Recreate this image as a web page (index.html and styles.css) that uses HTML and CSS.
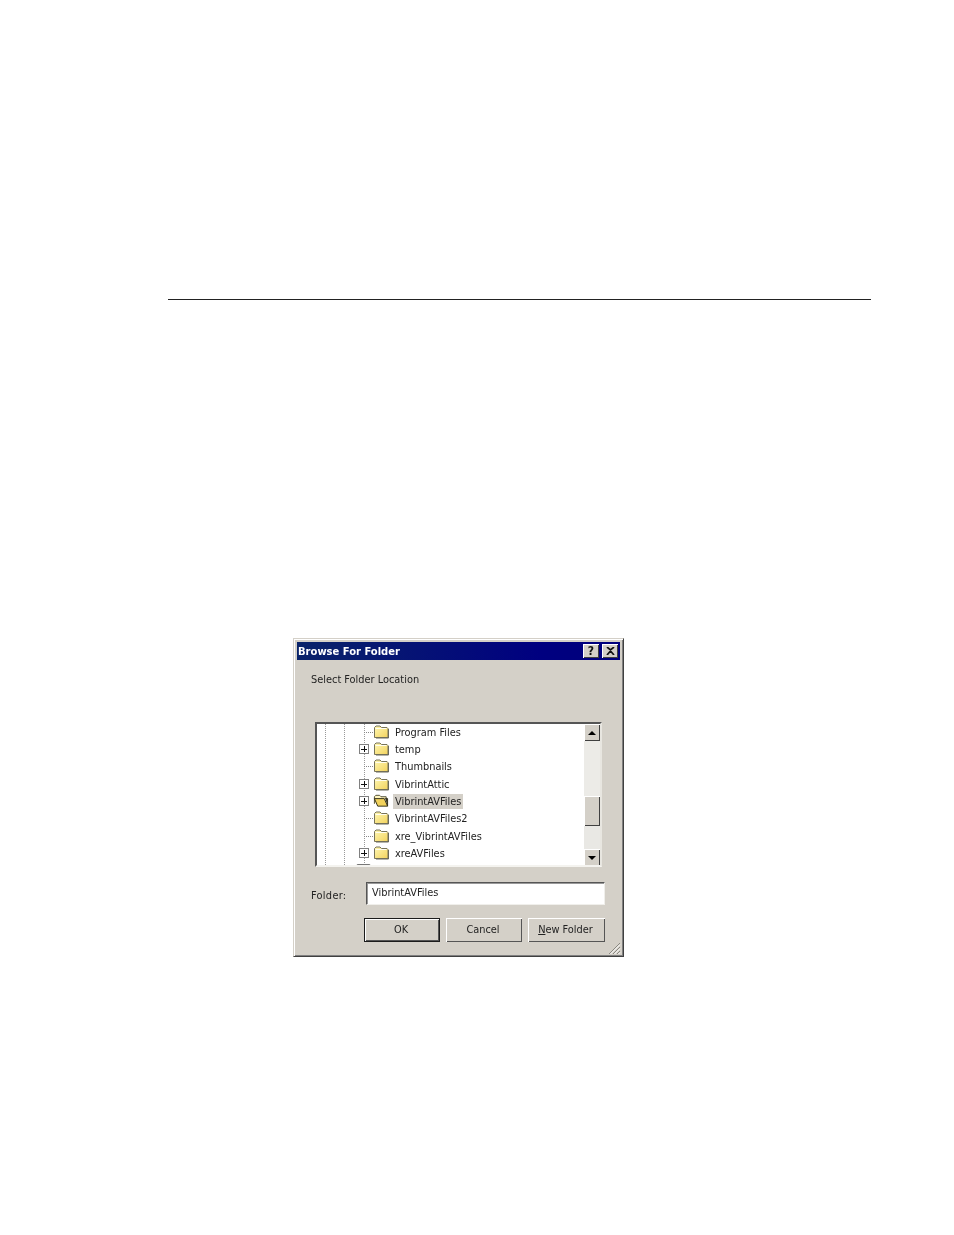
FILE: index.html
```html
<!DOCTYPE html>
<html lang="en">
<head>
<meta charset="utf-8">
<title>Browse For Folder</title>
<link rel="stylesheet" href="styles.css">
</head>
<body>
<svg class="defs" width="0" height="0" aria-hidden="true">
  <defs>
    <linearGradient id="fold" x1="0" y1="0" x2="1" y2="1">
      <stop offset="0" stop-color="#fff8b4"/>
      <stop offset="1" stop-color="#f2d25c"/>
    </linearGradient>
    <symbol id="folder" viewBox="0 0 16 15">
      <path d="M1.500 13.500V3.500L3 2h4l1.500 1.500H14l1 1v9z" fill="url(#fold)" stroke="#77735a" stroke-width="1"/>
      <path d="M2.500 4.500h11" stroke="#fffef0" fill="none"/>
      <path d="M15.500 5v9H3" stroke="#6a6a5a" fill="none"/>
    </symbol>
    <symbol id="folder-open" viewBox="0 0 17 15">
      <path d="M1.500 11V3.500L3 2h4l1.500 1.500H14v2" fill="#fff6bf" stroke="#4a4830"/>
      <path d="M1.500 5.500H12l3.500 8H5z" fill="#f2d25c" stroke="#2c2a18"/>
      <path d="M13 5.500h2.500v8" fill="#3c3a24" stroke="#2e2c18"/>
    </symbol>
  </defs>
</svg>
<hr class="rule">
<section class="dialog">
  <header class="titlebar">
    <h1 class="title">Browse For Folder</h1>
    <div class="caption-buttons">
      <span class="caption-btn">?</span>
      <span class="caption-btn"><svg width="9" height="8" viewBox="0 0 9 8"><path d="M1 0l3.500 3L8 0M1 8l3.500-4L8 8" fill="none" stroke="#111" stroke-width="1.700"/></svg></span>
    </div>
  </header>
  <div class="client">
    <p class="prompt">Select Folder Location</p>
    <div class="tree-box">
      <div class="tree">
        <div class="row"><span class="no-expander"></span><svg class="icon"><use href="#folder"/></svg><span class="name">Program Files</span></div>
        <div class="row"><span class="expander"></span><svg class="icon"><use href="#folder"/></svg><span class="name">temp</span></div>
        <div class="row"><span class="no-expander"></span><svg class="icon"><use href="#folder"/></svg><span class="name">Thumbnails</span></div>
        <div class="row"><span class="expander"></span><svg class="icon"><use href="#folder"/></svg><span class="name">VibrintAttic</span></div>
        <div class="row"><span class="expander"></span><svg class="icon"><use href="#folder-open"/></svg><span class="name selected">VibrintAVFiles</span></div>
        <div class="row"><span class="no-expander"></span><svg class="icon"><use href="#folder"/></svg><span class="name">VibrintAVFiles2</span></div>
        <div class="row"><span class="no-expander"></span><svg class="icon"><use href="#folder"/></svg><span class="name">xre_VibrintAVFiles</span></div>
        <div class="row"><span class="expander"></span><svg class="icon"><use href="#folder"/></svg><span class="name">xreAVFiles</span></div>
        <div class="row partial"><span class="drive"></span></div>
      </div>
      <div class="scrollbar">
        <span class="scroll-btn"><span class="arrow-up"></span></span>
        <span class="track-top"></span>
        <span class="thumb"></span>
        <span class="track-bottom"></span>
        <span class="scroll-btn"><span class="arrow-down"></span></span>
      </div>
    </div>
    <div class="folder-line">
      <label class="folder-label">Folder:</label>
      <div class="folder-input">VibrintAVFiles</div>
    </div>
    <div class="actions">
      <button class="btn default">OK</button>
      <button class="btn">Cancel</button>
      <button class="btn wide"><span><u>N</u>ew Folder</span></button>
    </div>
  </div>
  <svg class="grip" width="13" height="13" viewBox="0 0 13 13"><path d="M12 1L1 12M12 5L5 12M12 9L9 12" stroke="#8a8880" fill="none"/><path d="M12 2.500L2.500 12M12 6.500L6.500 12M12 10.500L10.500 12" stroke="#fff" fill="none"/></svg>
</section>
</body>
</html>
```
FILE: styles.css
```css
* { box-sizing: border-box; }
html, body { margin: 0; padding: 0; background: #fff; }
body {
  width: 954px;
  height: 1235px;
  overflow: hidden;
  font-family: "DejaVu Sans", "Liberation Sans", sans-serif;
  font-stretch: condensed;
  font-size: 10.900px;
  color: #222;
}
.defs { display: block; height: 0; }
.rule {
  display: block;
  width: 703px;
  height: 1px;
  margin: 299px 0 0 168px;
  border: 0;
  background: #222;
}
.dialog {
  position: relative;
  width: 331px;
  height: 319px;
  margin: 338px 0 0 293px;
  padding: 3px;
  background: #d4d0c8;
  border: 1px solid;
  border-color: #d4d0c8 #404040 #404040 #d4d0c8;
  box-shadow: inset 1px 1px 0 #fff, inset -1px -1px 0 #808080;
  filter: blur(0.3px);
}
.titlebar {
  display: flex;
  align-items: center;
  justify-content: space-between;
  height: 18px;
  padding: 0 2px 0 1px;
  background: linear-gradient(90deg, #0a246a, #000080 75%, #00007c);
}
.title {
  margin: 0;
  font-size: 11.100px;
  font-weight: 700;
  color: #fff;
}
.caption-buttons { display: flex; gap: 3px; }
.caption-btn {
  display: flex;
  align-items: center;
  justify-content: center;
  width: 16px;
  height: 14px;
  background: #d4d0c8;
  color: #111;
  font-size: 12px;
  font-weight: 700;
  box-shadow: inset 1px 1px 0 #fff, inset -1px -1px 0 #404040;
}
.client { padding: 13px 15px 0 14px; }
.prompt { margin: 0; height: 14px; line-height: 14px; }
.tree-box {
  display: flex;
  width: 287px;
  height: 145px;
  margin: 35px 0 0 4px;
  background: #fff;
  border: 2px solid;
  border-color: #555 #e8e6e0 #f4f3ef #555;
  overflow: hidden;
}
.tree {
  flex: 1;
  min-width: 0;
  height: 142px;
  overflow: hidden;
  background-image:
    linear-gradient(#999 50%, transparent 50%),
    linear-gradient(#999 50%, transparent 50%),
    linear-gradient(#999 50%, transparent 50%);
  background-size: 1px 2px;
  background-repeat: repeat-y;
  background-position: 8px 0, 27px 0, 47px 0;
}
.row {
  display: flex;
  align-items: center;
  height: 17.330px;
  padding-left: 42px;
}
.row:first-child { margin-top: -0.500px; }
.expander {
  flex: none;
  width: 10px;
  height: 10px;
  background:
    linear-gradient(#111, #111) center / 6px 1px no-repeat,
    linear-gradient(#111, #111) center / 1px 6px no-repeat,
    #fff;
  border: 1px solid #808080;
  margin-right: 4px;
}
.no-expander {
  flex: none;
  width: 9px;
  height: 1px;
  background: repeating-linear-gradient(90deg, #888 0 1px, transparent 1px 2px);
  margin-left: 5px;
}
.icon { flex: none; width: 16px; height: 15px; margin-bottom: 2px; }
.name {
  margin-left: 4px;
  padding: 0 2px;
  line-height: 15px;
  white-space: nowrap;
}
.selected { background: #d4d0c8; }
.partial { align-items: flex-start; }
.drive {
  width: 15px;
  height: 5px;
  margin: 2px 0 0 -3px;
  background: #d4d0c8;
  border: 1px solid #777;
  border-radius: 2px 2px 0 0;
}
.scrollbar {
  flex: none;
  display: flex;
  flex-direction: column;
  width: 16px;
  height: 142px;
}
.scroll-btn {
  flex: none;
  display: flex;
  align-items: center;
  justify-content: center;
  height: 17px;
  background: #d4d0c8;
  box-shadow: inset 1px 1px 0 #fff, inset -1px -1px 0 #404040;
}
.arrow-up, .arrow-down { width: 0; height: 0; border: 4px solid transparent; }
.arrow-up { border-top: 0; border-bottom-color: #000; }
.arrow-down { border-bottom: 0; border-top-color: #000; }
.track-top { height: 55px; background: #ecebe7; }
.thumb {
  flex: none;
  height: 30px;
  background: #d4d0c8;
  box-shadow: inset 1px 1px 0 #fff, inset -1px -1px 0 #404040;
}
.track-bottom { flex: 1; background: #e9e8e4; }
.folder-line {
  display: flex;
  align-items: center;
  margin-top: 15px;
}
.folder-label { width: 55px; padding-top: 4px; letter-spacing: 0.300px; }
.folder-input {
  width: 239px;
  height: 23px;
  padding: 3px 0 0 5px;
  background: #fff;
  border: 1px solid;
  border-color: #555 #f0efeb #f0efeb #555;
  box-shadow: inset 1px 1px 0 #999;
  line-height: 14px;
}
.actions {
  display: flex;
  gap: 6px;
  margin: 13px 0 0 53px;
}
.btn {
  width: 76px;
  height: 24px;
  padding: 0 2px 1px 0;
  background: #d4d0c8;
  border: 0;
  font: inherit;
  color: #222;
  box-shadow: inset 1px 1px 0 #fff, inset -1px -1px 0 #555;
}
.wide { width: 77px; }
.default { border: 1px solid #1c1c1c; }
.grip { position: absolute; right: 2px; bottom: 1px; }
```
